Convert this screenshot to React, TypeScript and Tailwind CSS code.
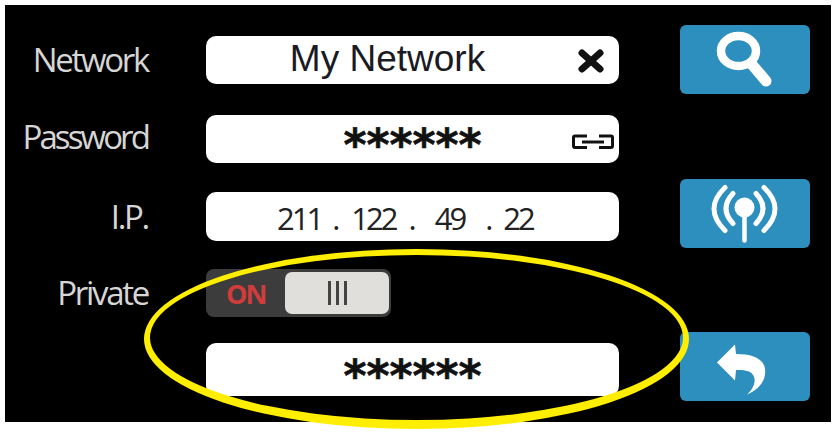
const ipParts = [
  { text: "211", className: "ml-0" },
  { text: ".", className: "ml-[11px]" },
  { text: "122", className: "ml-[14px]" },
  { text: ".", className: "ml-[13px]" },
  { text: "49", className: "ml-[21px]" },
  { text: ".", className: "ml-[21px]" },
  { text: "22", className: "ml-[13px]" },
];

function Label({ text, className }: { text: string; className: string }) {
  return (
    <div className={`relative w-[143px] text-right font-['Open_Sans',sans-serif] text-[33px] leading-none text-[#d6d6d6] ${className}`}>
      {text}
    </div>
  );
}

function Stars() {
  return (
    <span className="relative top-[6px] font-['DejaVu_Sans',sans-serif] text-[44px] leading-none font-bold text-[#111] [-webkit-text-stroke:0.6px_#111]">
      ******
    </span>
  );
}

function BlueButton({ children }: { children: React.ReactNode }) {
  return (
    <button className="flex h-[69px] w-[130px] items-center justify-center rounded-[6px] bg-[#2d8fbd]">
      {children}
    </button>
  );
}

export default function App() {
  return (
    <div className="relative h-[435px] w-[836px] overflow-hidden bg-white p-[5px]">
      <div className="flex h-[417px] w-[826px] bg-black">
        <div className="flex flex-col pt-[31px]">
          <div className="flex h-[48px] items-center gap-[58px]">
            <Label text="Network" className="-top-[1px] tracking-[-2.3px]" />
            <div className="relative flex h-full w-[413px] items-center justify-center rounded-[10px] bg-white">
              <span className="relative right-[25px] -top-[2px] font-['Liberation_Sans',sans-serif] text-[37px] leading-none text-[#1a1a22]">
                My Network
              </span>
              <svg className="absolute left-[372px] top-[13px]" width="26" height="24" viewBox="0 0 26 24">
                <path d="M4 4 L22 20 M22 4 L4 20" stroke="#111" strokeWidth="7" strokeLinecap="round" />
              </svg>
            </div>
          </div>
          <div className="mt-[31px] flex h-[48px] items-center gap-[58px]">
            <Label text="Password" className="-top-[3px] tracking-[-2.9px]" />
            <div className="relative flex h-full w-[413px] items-center justify-center rounded-[10px] bg-white">
              <Stars />
              <svg className="absolute left-[366px] top-[19px]" width="42" height="16" viewBox="0 0 42 16">
                <path d="M15 2 H3 a1.5 1.5 0 0 0 -1.5 1.5 V12 a1.5 1.5 0 0 0 1.5 1.5 H15 M27 2 H39 a1.5 1.5 0 0 1 1.5 1.5 V12 a1.5 1.5 0 0 1 -1.5 1.5 H27 M10 8 H32" fill="none" stroke="#111" strokeWidth="3" />
              </svg>
            </div>
          </div>
          <div className="mt-[29px] flex h-[49px] items-center gap-[58px]">
            <Label text="I.P." className="top-0 tracking-[-2.3px]" />
            <div className="flex h-full w-[413px] items-center rounded-[10px] bg-white pl-[71px] pt-[3px]">
              {ipParts.map((part) => (
                <span
                  key={part.text + part.className}
                  className={`font-['Open_Sans',sans-serif] text-[31px] leading-none tracking-[-3px] text-[#222] ${part.className}`}
                >
                  {part.text}
                </span>
              ))}
            </div>
          </div>
          <div className="mt-[28px] flex h-[48px] items-center gap-[58px]">
            <Label text="Private" className="-top-[1px] tracking-[-2.3px]" />
            <div className="flex h-full w-[185px] items-center rounded-[8px] bg-[#3c3c3c] pl-[20px] pr-[2px]">
              <span className="w-[59px] font-['Open_Sans',sans-serif] text-[27px] leading-none font-bold tracking-[-2px] text-[#d03c3c]">ON</span>
              <div className="flex h-[42px] w-[104px] items-center justify-center gap-[5px] rounded-[7px] bg-[#e0dfdc]">
                <div className="h-[24px] w-[3px] bg-[#444]" />
                <div className="h-[24px] w-[3px] bg-[#444]" />
                <div className="h-[24px] w-[3px] bg-[#444]" />
              </div>
            </div>
          </div>
          <div className="mt-[26px] flex h-[53px] items-center gap-[58px]">
            <div className="w-[143px]" />
            <div className="flex h-full w-[413px] items-center justify-center rounded-[10px] bg-white">
              <Stars />
            </div>
          </div>
        </div>
        <div className="ml-[61px] flex flex-col pt-[20px]">
          <BlueButton>
            <svg width="60" height="60" viewBox="0 0 60 60">
              <ellipse cx="23.5" cy="21" rx="17.5" ry="15" fill="none" stroke="white" strokeWidth="8.5" />
              <path d="M37 34.5 L51 51" stroke="white" strokeWidth="11" strokeLinecap="round" />
            </svg>
          </BlueButton>
          <div className="mt-[85px]">
            <BlueButton>
              <svg width="70" height="60" viewBox="0 0 70 60">
                <circle cx="34.5" cy="23.5" r="10" fill="white" />
                <path d="M34.5 28 V56.5" stroke="white" strokeWidth="4.5" strokeLinecap="round" />
                <path d="M23 9.5 Q9 24.5 23 39.5 M46 9.5 Q60 24.5 46 39.5 M15 3.5 Q-7 24.5 15 46.5 M54 3.5 Q76 24.5 54 46.5" fill="none" stroke="white" strokeWidth="5" strokeLinecap="round" />
              </svg>
            </BlueButton>
          </div>
          <div className="mt-[84px]">
            <BlueButton>
              <svg width="60" height="60" viewBox="0 0 60 60">
                <path d="M2 25.5 L20 7.5 L21 17 C38 17 52 22 50 37 C49 47 41 54 32 57.5 C38 52 42 44 38 38 C35 33 28 33 21 33 L20 43.5 Z" fill="white" />
              </svg>
            </BlueButton>
          </div>
        </div>
      </div>
      <svg className="pointer-events-none absolute left-0 top-0" width="836" height="435" viewBox="0 0 836 435">
        <path
          fillRule="evenodd"
          fill="#ffee00"
          d="M144 339 A272.5 90 0 1 0 689 339 A272.5 90 0 1 0 144 339 Z M150 337.5 A266.5 82.5 0 1 1 683 337.5 A266.5 82.5 0 1 1 150 337.5 Z"
        />
      </svg>
    </div>
  );
}
